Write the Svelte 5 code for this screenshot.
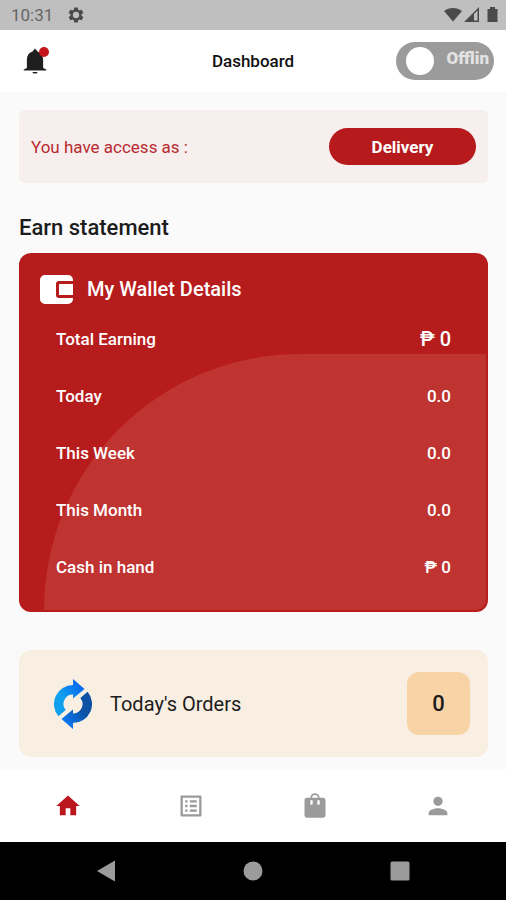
<script lang="ts">
	interface WalletRow {
		label: string;
		value: string;
	}

	const walletRows: WalletRow[] = [
		{ label: 'Total Earning', value: '₱ 0' },
		{ label: 'Today', value: '0.0' },
		{ label: 'This Week', value: '0.0' },
		{ label: 'This Month', value: '0.0' },
		{ label: 'Cash in hand', value: '₱ 0' }
	];

	const tabs = [
		{ name: 'Home', path: 'M10 20v-6h4v6h5v-8h3L12 3 2 12h3v8z' },
		{
			name: 'Orders',
			path: 'M19 5v14H5V5h14m1.1-2H3.9c-.5 0-.9.4-.9.9v16.2c0 .4.4.9.9.9h16.2c.4 0 .9-.5.9-.9V3.9c0-.5-.5-.9-.9-.9zM11 7h6v2h-6V7zm0 4h6v2h-6v-2zm0 4h6v2h-6zM7 7h2v2H7zm0 4h2v2H7zm0 4h2v2H7z'
		},
		{
			name: 'Shop',
			path: 'M19 5h-3a4 4 0 0 0-8 0H5c-1.1 0-2 .9-2 2v13c0 1.1.9 2 2 2h14c1.1 0 2-.9 2-2V7c0-1.1-.9-2-2-2zm-7-2.5a2.5 2.5 0 0 1 2.5 2.5h-5A2.5 2.5 0 0 1 12 2.5zM10 10a1 1 0 0 1-2 0V7h2zm6 0a1 1 0 0 1-2 0V7h2z'
		},
		{
			name: 'Profile',
			path: 'M12 12c2.21 0 4-1.79 4-4s-1.79-4-4-4-4 1.79-4 4 1.79 4 4 4zm0 2c-2.67 0-8 1.34-8 4v2h16v-2c0-2.66-5.33-4-8-4z'
		}
	];

	let activeTab = $state('Home');
	let online = $state(false);
</script>

<div class="screen">
	<div class="status">
		<span>10:31</span>
		<svg class="gear" viewBox="0 0 24 24" width="18" height="18" aria-hidden="true">
			<path
				fill-rule="evenodd"
				d="M19.43 12.98c.04-.32.07-.64.07-.98s-.03-.66-.07-.98l2.11-1.65c.19-.15.24-.42.12-.64l-2-3.46c-.12-.22-.39-.3-.61-.22l-2.49 1c-.52-.4-1.08-.73-1.69-.98l-.38-2.65A.49.49 0 0 0 14 2h-4c-.25 0-.46.18-.49.42l-.38 2.65c-.61.25-1.17.59-1.69.98l-2.49-1c-.23-.09-.49 0-.61.22l-2 3.46c-.13.22-.07.49.12.64l2.11 1.65c-.04.32-.07.65-.07.98s.03.66.07.98l-2.11 1.65c-.19.15-.24.42-.12.64l2 3.46c.12.22.39.3.61.22l2.49-1c.52.4 1.08.73 1.69.98l.38 2.65c.03.24.24.42.49.42h4c.25 0 .46-.18.49-.42l.38-2.65c.61-.25 1.17-.59 1.69-.98l2.49 1c.23.09.49 0 .61-.22l2-3.46c.12-.22.07-.49-.12-.64zM12 16.2a4.2 4.2 0 1 1 0-8.4 4.2 4.2 0 0 1 0 8.4z"
			/>
		</svg>
		<svg class="signals" viewBox="0 0 55 18" width="55" height="18" aria-hidden="true">
			<path d="M0 5C5 1 13 1 18 5L9 15.5z" />
			<path fill-rule="evenodd" d="M20 16L35 1v15zM30 8v6.5h3.5V4.5z" />
			<path d="M43.5 3H46V1h5v2h2.5v13h-10z" />
		</svg>
	</div>

	<header>
		<div class="side">
			<button class="bell" aria-label="Notifications">
				<svg viewBox="0 0 24 24" width="30" height="30" aria-hidden="true">
					<path
						d="M12 22c1.1 0 2-.5 2-1.3h-4c0 .8.9 1.3 2 1.3zm6.500-4.500V11c0-3.300-1.500-5.600-4.500-6.600L12 2l-2 2.400C7 5.400 5.500 7.700 5.500 11v6.500L3 18.700v.8h18v-.8z"
					/>
				</svg>
				<span class="dot"></span>
			</button>
		</div>
		<h1>Dashboard</h1>
		<div class="side end">
			<label class="switch">
				<input type="checkbox" aria-label="Availability" bind:checked={online} />
				<span class="knob"></span>
				<span class="state">{online ? 'Online' : 'Offlin'}</span>
			</label>
		</div>
	</header>

	<main>
		<section class="access">
			<p>You have access as :</p>
			<button>Delivery</button>
		</section>

		<h2>Earn statement</h2>
		<section class="wallet">
			<h3>
				<svg viewBox="0 0 34 29" width="34" height="29" aria-hidden="true">
					<path
						d="M5 0h23a5 5 0 0 1 5 5v1H20a4 4 0 0 0-4 4v9a4 4 0 0 0 4 4h13v1a5 5 0 0 1-5 5H5a5 5 0 0 1-5-5V5a5 5 0 0 1 5-5z"
					/>
					<path d="M19 9h14v11H19z" />
					<path class="clasp" d="M34 7.5H19.500a2 2 0 0 0-2 2v10a2 2 0 0 0 2 2H34" />
				</svg>
				My Wallet Details
			</h3>
			<dl>
				{#each walletRows as row, i}
					<div class="row" class:total={i === 0}>
						<dt>{row.label}</dt>
						<dd>{row.value}</dd>
					</div>
				{/each}
			</dl>
		</section>

		<section class="orders">
			<svg viewBox="0 0 38 50" width="38" height="50" aria-hidden="true">
				<defs>
					<linearGradient id="arrow-up" x1="0" y1="1" x2="1" y2="0">
						<stop offset="0.4" stop-color="#10a0ee" />
						<stop offset="0.9" stop-color="#0a62f0" />
					</linearGradient>
					<linearGradient id="arrow-down" x1="0" y1="1" x2="1" y2="0">
						<stop offset="0.1" stop-color="#0a7cf8" />
						<stop offset="0.6" stop-color="#0c51a4" />
					</linearGradient>
				</defs>
				<path
					fill="url(#arrow-up)"
					d="M19 0L30.500 10 19 19.500V15.500A9.500 9.500 0 0 0 11.700 31.100L4.400 37.200A19 19 0 0 1 19 6z"
				/>
				<path
					fill="url(#arrow-down)"
					d="M19 50L7.500 40 19 30.500V34.500A9.500 9.500 0 0 0 26.300 18.900L33.600 12.800A19 19 0 0 1 19 44z"
				/>
			</svg>
			<h3>Today's Orders</h3>
			<span class="count">0</span>
		</section>
	</main>

	<nav class="tabs">
		{#each tabs as tab}
			<button
				class:active={activeTab === tab.name}
				aria-label={tab.name}
				onclick={() => (activeTab = tab.name)}
			>
				<svg viewBox="0 0 24 24" width="28" height="28" aria-hidden="true">
					<path fill-rule="evenodd" d={tab.path} />
				</svg>
			</button>
		{/each}
	</nav>

	<div class="system">
		<button aria-label="Back">
			<svg viewBox="0 0 24 24" width="24" height="24" aria-hidden="true">
				<path d="M3 12L21 1.500v21z" />
			</svg>
		</button>
		<button aria-label="Home screen">
			<svg viewBox="0 0 24 24" width="24" height="24" aria-hidden="true">
				<circle cx="12" cy="12" r="9.500" />
			</svg>
		</button>
		<button aria-label="Recent apps">
			<svg viewBox="0 0 24 24" width="24" height="24" aria-hidden="true">
				<rect x="2.500" y="2.500" width="19" height="19" rx="1.500" />
			</svg>
		</button>
	</div>
</div>

<style>
	:global(body) {
		margin: 0;
	}

	.screen {
		display: flex;
		flex-direction: column;
		min-height: 100vh;
		background-color: #fafafa;
		color: #1c1c1c;
		font-family: Roboto, sans-serif;
	}

	h1,
	h2,
	h3,
	p,
	dl,
	dd {
		margin: 0;
	}

	button {
		padding: 0;
		border: none;
		background: none;
		font-family: inherit;
		cursor: pointer;
	}

	svg {
		display: block;
		flex-shrink: 0;
	}

	.status {
		display: flex;
		align-items: center;
		height: 30px;
		padding: 0 7px 0 11px;
		background-color: #bfbfbf;
		color: #666;
		font-size: 17px;
	}

	.status svg {
		fill: #4a4a4a;
	}

	.gear {
		margin-left: 14px;
	}

	.signals {
		margin-left: auto;
	}

	header {
		display: flex;
		align-items: center;
		height: 62px;
		padding: 0 12px;
		background-color: #fff;
	}

	.side {
		display: flex;
		flex: 1;
	}

	.side.end {
		justify-content: flex-end;
	}

	.bell {
		position: relative;
		margin-left: 8px;
	}

	.bell svg {
		fill: #1f1f1f;
	}

	.dot {
		position: absolute;
		top: 1px;
		right: 1px;
		width: 10px;
		height: 10px;
		border-radius: 50%;
		background-color: #c4161c;
	}

	h1 {
		color: #111;
		font-size: 17px;
		font-weight: 500;
	}

	.switch {
		position: relative;
		display: flex;
		box-sizing: border-box;
		width: 98px;
		height: 38px;
		padding: 5px 5px 5px 10px;
		border-radius: 19px;
		background-color: #9b9b9b;
		cursor: pointer;
	}

	.switch input {
		position: absolute;
		inset: 0;
		width: 100%;
		height: 100%;
		margin: 0;
		opacity: 0;
	}

	.knob {
		width: 28px;
		height: 28px;
		border-radius: 50%;
		background-color: #fff;
	}

	.state {
		margin-left: auto;
		color: #e2e2e2;
		font-size: 17px;
		font-weight: 900;
		line-height: 22px;
	}

	main {
		flex: 1;
		padding: 18px 18px 12px 19px;
	}

	.access {
		display: flex;
		align-items: center;
		justify-content: space-between;
		height: 73px;
		padding: 0 12px;
		border-radius: 6px;
		background-color: #f7eeee;
	}

	.access p {
		color: #b92a30;
		font-size: 17px;
	}

	.access button {
		width: 147px;
		height: 37px;
		border-radius: 19px;
		background-color: #b71a1c;
		color: #fff;
		font-size: 17px;
		font-weight: 700;
	}

	h2 {
		margin: 32px 0 12px;
		font-size: 22px;
		font-weight: 500;
		line-height: 26px;
	}

	.wallet {
		position: relative;
		overflow: hidden;
		padding: 21px 37px 17px 21px;
		border-radius: 12px;
		background-color: #b71c1c;
		color: #fff;
	}

	/* pale quarter circle behind the lower rows */
	.wallet::before {
		position: absolute;
		inset: 101px 2px 2px 25px;
		border-radius: 256px 0 10px 0;
		background-color: #bf3331;
		content: '';
	}

	.wallet h3 {
		display: flex;
		align-items: center;
		gap: 13px;
		height: 30px;
		font-size: 20px;
		font-weight: 500;
	}

	.wallet svg {
		fill: #fff;
	}

	.wallet .clasp {
		fill: none;
		stroke: #b71c1c;
		stroke-width: 3;
	}

	.wallet dl {
		position: relative;
		padding: 6px 0 0 16px;
	}

	.row {
		display: flex;
		align-items: center;
		justify-content: space-between;
		height: 57px;
		font-size: 17px;
		font-weight: 500;
	}

	.row.total dd {
		font-size: 20px;
	}

	.orders {
		display: flex;
		align-items: center;
		height: 107px;
		margin-top: 38px;
		padding: 0 18px 0 35px;
		border-radius: 12px;
		background-color: #f9eee2;
	}

	.orders h3 {
		margin-left: 18px;
		font-size: 20px;
		font-weight: 400;
	}

	.count {
		width: 63px;
		margin-left: auto;
		border-radius: 12px;
		background-color: #f8d3a6;
		font-size: 22px;
		font-weight: 500;
		line-height: 63px;
		text-align: center;
	}

	.tabs {
		display: flex;
		height: 72px;
		padding: 0 6px;
		background-color: #fff;
	}

	.tabs button,
	.system button {
		display: flex;
		flex: 1;
		align-items: center;
		justify-content: center;
	}

	.tabs svg {
		fill: #9b9b9b;
	}

	.tabs .active svg {
		fill: #b9171b;
	}

	.system {
		display: flex;
		height: 58px;
		padding: 0 33px;
		background-color: #000;
	}

	.system svg {
		fill: #9b9b9b;
	}
</style>
